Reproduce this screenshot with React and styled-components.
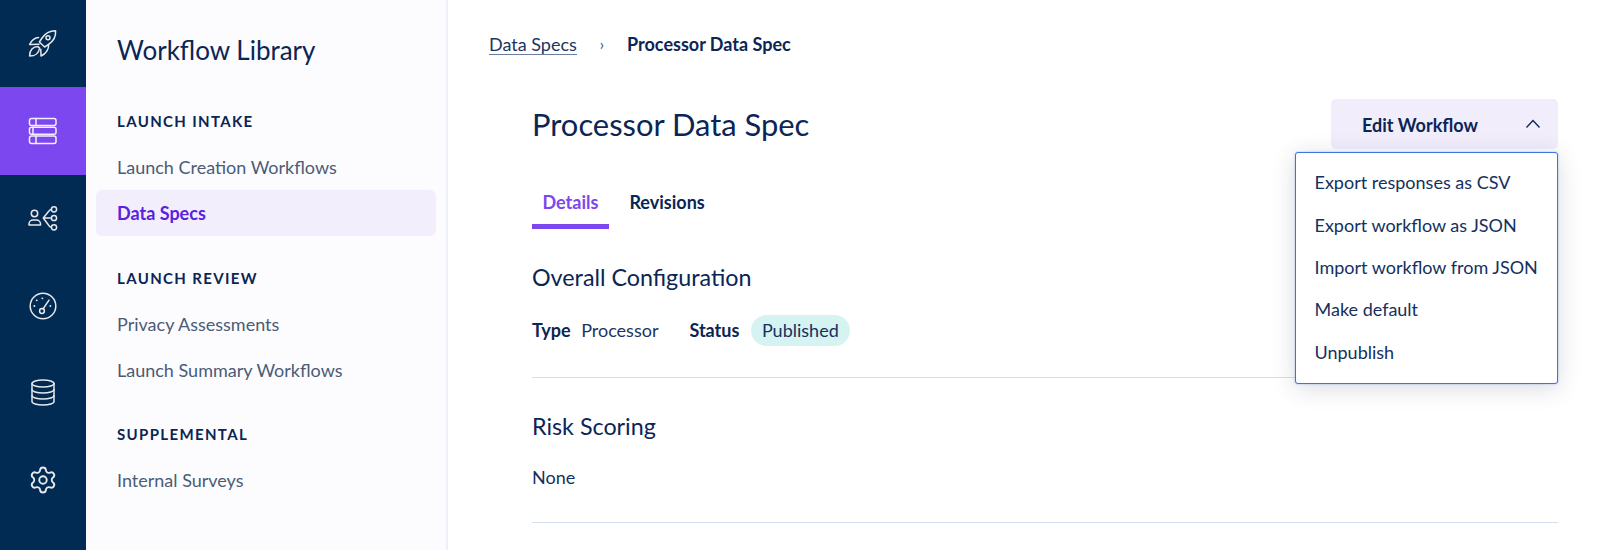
import React from "react";
import styled, { createGlobalStyle } from "styled-components";

const Global = createGlobalStyle`
  html, body { margin: 0; padding: 0; background: #fff; }
  body { font-family: Lato, "Liberation Sans", sans-serif; color: #0b2554; overflow: hidden; }
  * { box-sizing: border-box; }
`;

const Shell = styled.div`
  display: flex;
  height: 550px;
`;

const Rail = styled.nav`
  width: 86px;
  flex: none;
  background: #022b53;
  display: flex;
  flex-direction: column;
`;

const RailItem = styled.div`
  height: 87.3px;
  display: flex;
  align-items: center;
  justify-content: center;
  padding-right: 1px;
  background: ${(p) => (p.$active ? "#7c47ee" : "transparent")};
  color: ${(p) => (p.$active ? "#f4efff" : "#e6e8ec")};
`;

const Icon = styled.svg`
  width: 30px;
  height: 30px;
  fill: none;
  stroke: currentColor;
  stroke-width: 1.5;
  stroke-linecap: round;
  stroke-linejoin: round;
`;

const SideNav = styled.aside`
  width: 362px;
  flex: none;
  background: #fcfcfe;
  border-right: 2px solid #edf0f8;
  padding: 33px 10px 0 10px;
`;

const NavTitle = styled.h1`
  margin: 0 0 44px 21px;
  font-size: 26px;
  line-height: 34px;
  font-weight: 400;
  color: #0b2554;
`;

const NavSection = styled.section`
  margin-bottom: 31.6px;
`;

const NavHeading = styled.h2`
  margin: 0 0 13px 21px;
  font-size: 15px;
  line-height: 20px;
  font-weight: 700;
  letter-spacing: 1.35px;
  color: #0b2554;
`;

const NavItem = styled.div`
  height: 46px;
  display: flex;
  align-items: center;
  padding-left: 21px;
  border-radius: 6px;
  font-size: 18px;
  font-weight: ${(p) => (p.$active ? 700 : 400)};
  color: ${(p) => (p.$active ? "#5a21df" : "#4b5b76")};
  background: ${(p) => (p.$active ? "#f2eefc" : "transparent")};
`;

const Main = styled.main`
  flex: 1;
  min-width: 0;
  padding: 30px 42px 0 41px;
`;

const Breadcrumbs = styled.div`
  display: flex;
  align-items: center;
  height: 28px;
  font-size: 18px;
`;

const CrumbLink = styled.span`
  color: #1c3560;
  border-bottom: 1px solid #6d7e9c;
  line-height: 20px;
`;

const CrumbSep = styled.span`
  margin: 0 23px;
  font-size: 15px;
  color: #33486e;
`;

const CrumbCurrent = styled.span`
  font-weight: 700;
  color: #0b2554;
`;

const Content = styled.div`
  padding-left: 43px;
`;

const Header = styled.header`
  position: relative;
  display: flex;
  align-items: center;
  justify-content: space-between;
  margin-top: 41px;
  height: 50px;
`;

const PageTitle = styled.h2`
  margin: 0;
  font-size: 30.9px;
  font-weight: 400;
  color: #0b2554;
`;

const EditButton = styled.button`
  width: 227px;
  height: 50px;
  display: flex;
  align-items: center;
  justify-content: space-between;
  padding: 2px 17px 0 31px;
  border: 0;
  border-radius: 5px;
  background: #f1edfb;
  font-family: inherit;
  font-size: 18px;
  font-weight: 700;
  color: #0b2554;
`;

const Menu = styled.div`
  position: absolute;
  top: 53px;
  right: 0;
  width: 263px;
  height: 232px;
  padding: 8px 18.5px;
  background: #fff;
  border: 1.5px solid #3a76da;
  border-radius: 3px;
  box-shadow: 0 0 2px rgba(42, 104, 208, 0.45), 0 4px 24px rgba(20, 30, 60, 0.16);
  z-index: 2;
`;

const MenuItem = styled.div`
  height: 42.4px;
  display: flex;
  align-items: center;
  font-size: 18px;
  white-space: nowrap;
  color: #14305e;
`;

const Tabs = styled.div`
  display: flex;
  gap: 10px;
  margin-top: 31px;
`;

const Tab = styled.div`
  height: 49px;
  padding: 0 10.5px 1px;
  display: flex;
  align-items: center;
  font-size: 18px;
  font-weight: 700;
  color: ${(p) => (p.$active ? "#7c47ee" : "#0b2554")};
  border-bottom: 5px solid ${(p) => (p.$active ? "#7c47ee" : "transparent")};
`;

const Section = styled.section`
  border-bottom: 1.5px solid #d6dff0;
`;

const SectionTitle = styled.h3`
  margin: 0;
  font-size: 23.3px;
  line-height: 30px;
  font-weight: 400;
  color: #0b2554;
`;

const FirstSection = styled(Section)`
  padding-top: 33px;
  height: 149px;
`;

const RiskSection = styled(Section)`
  padding-top: 33px;
  height: 145px;
`;

const MetaRow = styled.div`
  display: flex;
  align-items: center;
  margin-top: 22px;
  font-size: 18px;
  height: 32px;
`;

const MetaLabel = styled.span`
  font-weight: 700;
  color: #0b2554;
  margin-right: 10.5px;
`;

const MetaValue = styled.span`
  color: #1c3560;
  margin-right: 31px;
`;

const Pill = styled.span`
  height: 31px;
  display: flex;
  align-items: center;
  margin-left: 1px;
  padding: 0 11px;
  border-radius: 16px;
  background: #d5f4f1;
  color: #14305e;
`;

const BodyText = styled.p`
  margin: 25px 0 0;
  font-size: 18px;
  color: #14305e;
`;

const Rocket = () => (
  <Icon viewBox="0 0 30 30">
    <path d="M27.6 1.8C22 2 17 4.500 14 9l-2.600 4 5.200 5 4-2.600C25 12.500 28 8 27.600 1.800Z" />
    <circle cx="20" cy="8.800" r="2" />
    <path d="M10.600 8.600C7 8.600 3 11.500 1.600 15.600L11 15.200" />
    <path d="M20.600 15.600C21 20 18 25 13 27l-.2-6.800" />
    <path d="M10 17.600C5 17.600 1.600 21 1.600 27c5.400 0 9.400-3 10-8Z" />
  </Icon>
);

const Server = () => (
  <Icon viewBox="0 0 30 30" strokeWidth="1.7">
    <rect x="1.500" y="2.500" width="26.500" height="7" rx="2" />
    <rect x="1.500" y="11.200" width="26.500" height="7" rx="2" />
    <rect x="1.500" y="20" width="26.500" height="7.500" rx="2" />
    <path d="M8 2.500v7M5 11.200v7M8 20v7.500" />
  </Icon>
);

const Network = () => (
  <Icon viewBox="0 0 30 30">
    <circle cx="6.500" cy="10.500" r="3.200" />
    <path d="M1 22v-1a4 4 0 0 1 4-4h3.500a4 4 0 0 1 4 4v1Z" />
    <circle cx="26" cy="6.300" r="2.600" />
    <circle cx="26" cy="15" r="2.600" />
    <circle cx="26" cy="24.300" r="2.600" />
    <path d="M15.300 15H23.400M15.300 15l5-6.200c.8-1.200 1.800-2.200 3.100-2.500M15.300 15l5 6.800c.8 1.200 1.800 2.200 3.100 2.500" />
  </Icon>
);

const Gauge = () => (
  <Icon viewBox="0 0 30 30">
    <circle cx="15" cy="15" r="12.800" />
    <circle cx="14" cy="20" r="2.400" />
    <path d="M15 18l6-8.800" />
    <path d="M6.300 15h.1M8.700 9.300h.1M14.300 7.300h.1M22.300 15h.1" strokeWidth="1.800" />
  </Icon>
);

const Database = () => (
  <Icon viewBox="0 0 30 30">
    <ellipse cx="15" cy="5.500" rx="11" ry="3.600" />
    <path d="M4 5.500v18c0 2 4.900 3.600 11 3.600s11-1.600 11-3.600v-18" />
    <path d="M4 11.500c0 2 4.900 3.600 11 3.600s11-1.600 11-3.600" />
    <path d="M4 17.500c0 2 4.900 3.600 11 3.600s11-1.600 11-3.600" />
  </Icon>
);

const Gear = () => (
  <Icon viewBox="0 0 24 24" strokeWidth="1.25">
    <path d="M9.671 4.136a2.340 2.340 0 0 1 4.659 0 2.340 2.340 0 0 0 3.319 1.915 2.340 2.340 0 0 1 2.330 4.033 2.340 2.340 0 0 0 0 3.831 2.340 2.340 0 0 1-2.330 4.033 2.340 2.340 0 0 0-3.319 1.915 2.340 2.340 0 0 1-4.659 0 2.340 2.340 0 0 0-3.320-1.915 2.340 2.340 0 0 1-2.330-4.033 2.340 2.340 0 0 0 0-3.831A2.340 2.340 0 0 1 6.350 6.051a2.340 2.340 0 0 0 3.319-1.915" />
    <circle cx="12" cy="12" r="3" />
  </Icon>
);

const Chevron = styled.svg`
  width: 16px;
  height: 10px;
  margin-top: -2px;
  fill: none;
  stroke: #0b2554;
  stroke-width: 1.3;
`;

export default function App() {
  return (
    <>
      <Global />
      <Shell>
        <Rail>
          <RailItem><Rocket /></RailItem>
          <RailItem $active><Server /></RailItem>
          <RailItem><Network /></RailItem>
          <RailItem><Gauge /></RailItem>
          <RailItem><Database /></RailItem>
          <RailItem><Gear /></RailItem>
        </Rail>
        <SideNav>
          <NavTitle>Workflow Library</NavTitle>
          <NavSection>
            <NavHeading>LAUNCH INTAKE</NavHeading>
            <NavItem>Launch Creation Workflows</NavItem>
            <NavItem $active>Data Specs</NavItem>
          </NavSection>
          <NavSection>
            <NavHeading>LAUNCH REVIEW</NavHeading>
            <NavItem>Privacy Assessments</NavItem>
            <NavItem>Launch Summary Workflows</NavItem>
          </NavSection>
          <NavSection>
            <NavHeading>SUPPLEMENTAL</NavHeading>
            <NavItem>Internal Surveys</NavItem>
          </NavSection>
        </SideNav>
        <Main>
          <Breadcrumbs>
            <CrumbLink>Data Specs</CrumbLink>
            <CrumbSep>›</CrumbSep>
            <CrumbCurrent>Processor Data Spec</CrumbCurrent>
          </Breadcrumbs>
          <Content>
            <Header>
              <PageTitle>Processor Data Spec</PageTitle>
              <EditButton>
                Edit Workflow
                <Chevron viewBox="0 0 16 10"><path d="M1.500 8.500 8 1.500l6.500 7" /></Chevron>
              </EditButton>
              <Menu>
                <MenuItem>Export responses as CSV</MenuItem>
                <MenuItem>Export workflow as JSON</MenuItem>
                <MenuItem>Import workflow from JSON</MenuItem>
                <MenuItem>Make default</MenuItem>
                <MenuItem>Unpublish</MenuItem>
              </Menu>
            </Header>
            <Tabs>
              <Tab $active>Details</Tab>
              <Tab>Revisions</Tab>
            </Tabs>
            <FirstSection>
              <SectionTitle>Overall Configuration</SectionTitle>
              <MetaRow>
                <MetaLabel>Type</MetaLabel>
                <MetaValue>Processor</MetaValue>
                <MetaLabel>Status</MetaLabel>
                <Pill>Published</Pill>
              </MetaRow>
            </FirstSection>
            <RiskSection>
              <SectionTitle>Risk Scoring</SectionTitle>
              <BodyText>None</BodyText>
            </RiskSection>
          </Content>
        </Main>
      </Shell>
    </>
  );
}
